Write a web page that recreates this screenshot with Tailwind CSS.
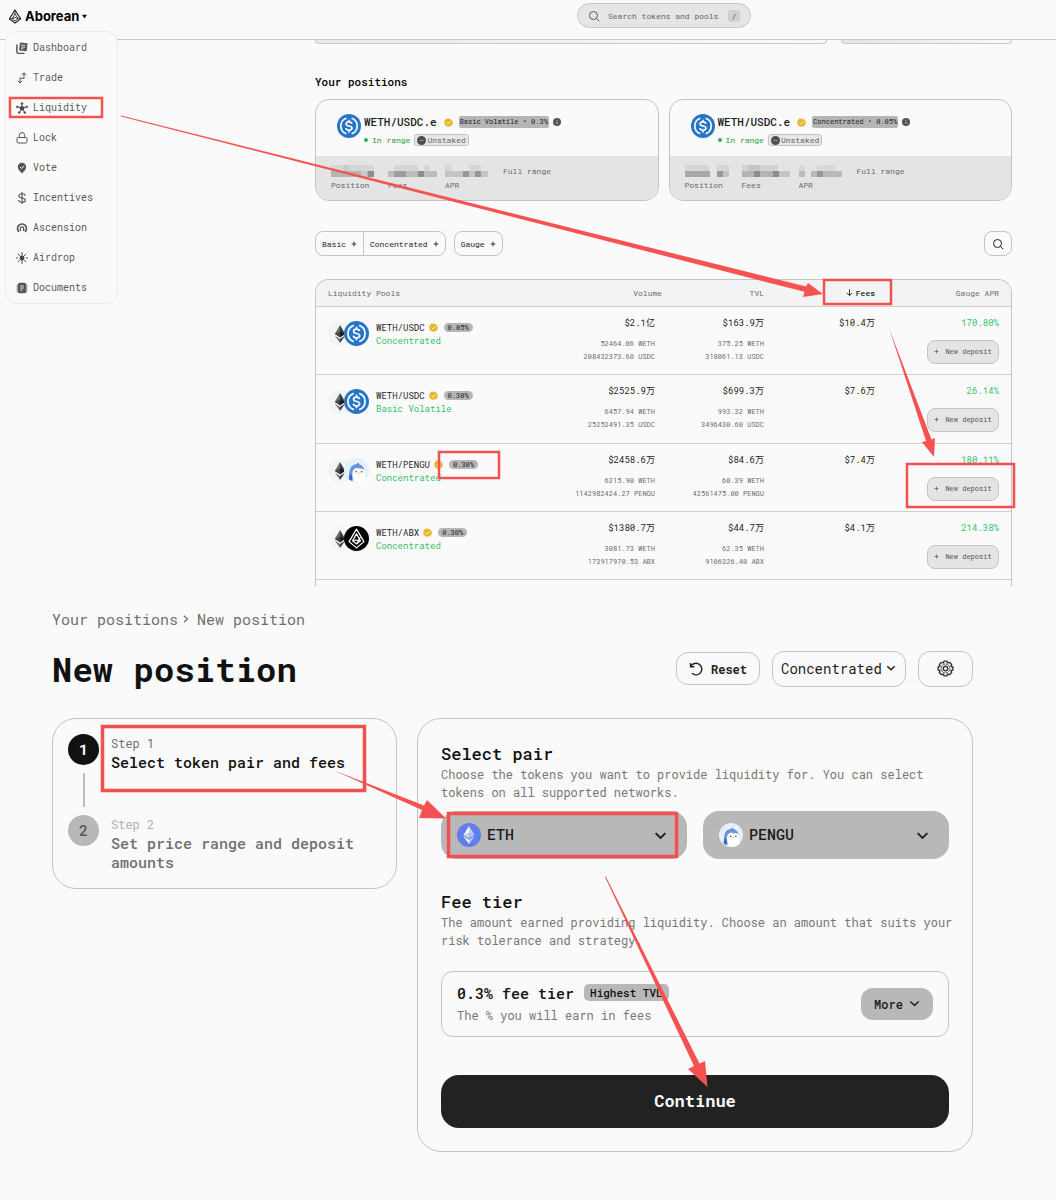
<!DOCTYPE html>
<html lang="en">
<head>
    <meta charset="UTF-8">
    <meta name="viewport" content="width=device-width, initial-scale=1.0">
    <title>Aborean - Liquidity</title>
    <script src="https://cdn.jsdelivr.net/npm/@tailwindcss/browser@4"></script>
    <style>
        body {
            font-family: 'Roboto Mono', 'DejaVu Sans Mono', 'Noto Sans CJK SC', monospace;
        }
    </style>
</head>
<body class="relative bg-[#fafafa] text-[#1c1c1c]">

    <!-- Shared icons -->
    <svg class="hidden" xmlns="http://www.w3.org/2000/svg">
        <symbol id="usdc" viewBox="0 0 32 32">
            <circle cx="16" cy="16" r="16" fill="#2775ca"/>
            <path d="M12.5 5.6a11 11 0 0 0 0 20.8M19.5 5.6a11 11 0 0 1 0 20.8" fill="none" stroke="#fff" stroke-width="2.2"/>
            <path d="M16 7.5v3M16 21.5v3M19.8 13c-.3-1.800-1.800-2.600-3.800-2.600-2.200 0-3.800 1-3.800 2.800 0 4 7.800 1.600 7.800 5.600 0 1.800-1.700 2.800-4 2.800-2.400 0-3.900-1-4.100-2.900" fill="none" stroke="#fff" stroke-width="2.200"/>
        </symbol>
        <symbol id="weth" viewBox="0 0 32 32">
            <circle cx="16" cy="16" r="16" fill="#f3f4f7"/>
            <path d="M16 4v13.500L9 16z" fill="#6b6b6b"/>
            <path d="M16 4v13.500L23 16z" fill="#3a3a3a"/>
            <path d="M9 16l7-3.500v8z" fill="#444"/>
            <path d="M23 16l-7-3.500v8z" fill="#1d1d1d"/>
            <path d="M9 18l7 4.500V28z" fill="#777"/>
            <path d="M23 18l-7 4.500V28z" fill="#3a3a3a"/>
        </symbol>
        <symbol id="eth" viewBox="0 0 32 32">
            <circle cx="16" cy="16" r="16" fill="#627eea"/>
            <path d="M16 4l-7.500 12.200L16 20.600z" fill="#fff"/>
            <path d="M16 4v16.600l7.500-4.400z" fill="#c6d0f8"/>
            <path d="M8.500 17.800L16 28v-5.800z" fill="#fff"/>
            <path d="M16 28l7.500-10.200-7.500 4.400z" fill="#c6d0f8"/>
            <path d="M8.500 16.200L16 12.800l7.500 3.400-7.500 4.400z" fill="#8ea2f0" opacity=".5"/>
        </symbol>
        <symbol id="pengu" viewBox="0 0 32 32">
            <circle cx="16" cy="16" r="16" fill="#e3f1fc"/>
            <path d="M6 27c1-4 .3-8 1.500-12C8.700 10.500 12 8 16.500 8c5 0 9 2.500 9.500 8l-3-2.500-8-1-4 3.500-.5 6 1 7c-2 0-4-.5-5.500-2z" fill="#6d8fe0"/>
            <path d="M12 30.500c1.500-3 .3-6-.3-9-.7-4 1.300-7.300 4.300-7.500 1.500 0 2 1 3.500 1s2.500-1.300 4-1c2.500.5 2.800 3.500 2.700 6 0 3.500 1.300 5.500.8 8.500-4.500 3-10 4-15 2z" fill="#fff"/>
            <path d="M16 8.500l2-1.500 1 1.500" fill="none" stroke="#4d6fc8" stroke-width="1.300"/>
            <circle cx="15.500" cy="17.500" r="1" fill="#333"/>
            <circle cx="22.500" cy="17.500" r="1" fill="#333"/>
            <path d="M17.500 18.800h3l-1.500 1.800z" fill="#eda33b"/>
            <path d="M7.500 21c-1 2.500-1.500 4.500-.5 6.500l3 1.500c.8-3 0-5.500-.5-8z" fill="#3f63c4"/>
        </symbol>
        <symbol id="abx" viewBox="0 0 32 32">
            <circle cx="16" cy="16" r="16" fill="#000"/>
            <path d="M16 4L6.500 20 16 28l9.500-8zM16 10l-5 9 5 4 5-4z" fill="none" stroke="#fff" stroke-width="1.600" stroke-linejoin="round"/>
            <path d="M11 19l4-1 6 1M16 23l5-9" fill="none" stroke="#fff" stroke-width="1.400"/>
        </symbol>
        <symbol id="verified" viewBox="0 0 20 20">
            <path d="M10 .8l2.300 1.700 2.900-.3 1.200 2.600 2.600 1.200-.3 2.900L20 10l-1.300 2.200.3 2.900-2.600 1.200-1.200 2.600-2.900-.3L10 20l-2.300-1.400-2.900.3-1.200-2.600L1 15.100l.3-2.900L0 10l1.300-2.100L1 5l2.600-1.200 1.200-2.600 2.900.3z" fill="#e9b62c"/>
            <path d="M5.500 10.200l3.200 3.200 6-6.200" fill="none" stroke="#fdf3c4" stroke-width="2.200"/>
        </symbol>
        <symbol id="info" viewBox="0 0 16 16">
            <circle cx="8" cy="8" r="8" fill="#555"/>
            <path d="M8 7v5M8 4v1.500" stroke="#ddd" stroke-width="1.600"/>
        </symbol>
        <symbol id="minus" viewBox="0 0 16 16">
            <circle cx="8" cy="8" r="8" fill="#4f4f4f"/>
            <path d="M4.500 8h7" stroke="#aaa" stroke-width="1.400"/>
        </symbol>
        <symbol id="search" viewBox="0 0 24 24">
            <circle cx="11" cy="11" r="8" fill="none" stroke="currentColor" stroke-width="2"/>
            <path d="M17 17l5 5" stroke="currentColor" stroke-width="2" stroke-linecap="round"/>
        </symbol>
        <symbol id="chevron" viewBox="0 0 12 12">
            <path d="M1.500 3.800L6 8.200l4.500-4.400" fill="none" stroke="currentColor" stroke-width="1.700"/>
        </symbol>
        <symbol id="plus" viewBox="0 0 10 10">
            <path d="M5 1v8M1 5h8" stroke="currentColor" stroke-width="1.400"/>
        </symbol>
    </svg>

    <header class="flex h-10 items-start border-b border-[#c9c9c9]">
        <div class="flex h-8 flex-1 items-center pl-2">
            <button class="flex items-center gap-[3px] text-[13px] leading-4 font-bold text-black font-['Inter',sans-serif]">
                <svg class="h-[15px] w-[14px]" viewBox="0 0 14 16" fill="none" stroke="#222" stroke-linejoin="round">
                    <path d="M7 1L1 10.500 7 15l6-4.500z" stroke-width="1.200"/>
                    <path d="M7 5l-3 5.500L7 12.700l3.200-2.400zM4 10.500l3-1.500 3.200 1.300M7 1v4M1 10.500h3M13 10.500h-3" stroke-width=".9"/>
                </svg>
                Aborean
                <svg class="size-[5px]" viewBox="0 0 6 6"><path d="M0 1h6L3 5.500z" fill="#111"/></svg>
            </button>
        </div>
        <label class="mt-[3px] flex h-[25px] w-[174px] items-center rounded-full border border-[#c8c8c8] bg-[#e5e5e5] px-[10px] text-[#555]">
            <svg class="size-3"><use href="#search"/></svg>
            <input type="search" aria-label="Search" placeholder="Search tokens and pools" class="ml-2 w-0 flex-1 bg-transparent text-[8px] outline-none placeholder:text-[#666]">
            <kbd class="flex size-3 items-center justify-center rounded-[2px] bg-[#cfcfcf] text-[8px] font-[inherit]">/</kbd>
        </label>
        <div class="w-[305px]"></div>
    </header>

    <!-- Main menu -->
    <nav class="absolute top-[31px] left-[5px] flex h-[273px] w-[113px] flex-col justify-between rounded-xl border border-[#ebebeb] bg-[#fafafa] pt-[9px] pb-2 pl-[10px] text-[10px] leading-[14px] text-[#5a5a5a]">
        <a href="#" class="flex items-center gap-[5px]">
            <svg class="size-3" viewBox="0 0 12 12"><path d="M4 .5l7.500.8-.8 8L3 8.500z" fill="#555"/><path d="M1 2.500L.8 9.500c0 1 .7 1.700 1.700 1.800l6 .2" fill="none" stroke="#555" stroke-width="1.500"/><path d="M5.300 3l4 .4M5.100 4.900l4 .4M4.900 6.700l2.500.3" stroke="#fafafa" stroke-width=".8"/></svg>
            Dashboard
        </a>
        <a href="#" class="flex items-center gap-[5px]">
            <svg class="size-3" viewBox="0 0 12 12" fill="none" stroke="#555"><path d="M8 1v5.500L4 6v5M5.700 3L8 .8 10.300 3M1.700 8.800L4 11l2.300-2.200"/></svg>
            Trade
        </a>
        <a href="#" class="flex items-center gap-[5px]">
            <svg class="size-3" viewBox="0 0 12 12" fill="#444" stroke="#444"><circle cx="6" cy="6.300" r="1.800"/><path d="M6 6V2M6 6L1.500 5M6 6l4.500-1M6 6.300l-2.600 4M6 6.300l2.600 4" stroke-width=".9"/><circle cx="6" cy="1.500" r=".8"/><circle cx="1.200" cy="4.800" r=".7"/><circle cx="10.800" cy="4.800" r=".7"/><circle cx="3.200" cy="10.500" r=".8"/><circle cx="8.800" cy="10.500" r=".8"/></svg>
            Liquidity
        </a>
        <a href="#" class="flex items-center gap-[5px]">
            <svg class="size-3" viewBox="0 0 12 12" fill="none" stroke="#555"><rect x="1" y="5.500" width="10" height="5.500" rx="1.300"/><path d="M3.300 5.500V3.300a2.700 2.700 0 0 1 5.400 0v2.200"/></svg>
            Lock
        </a>
        <a href="#" class="flex items-center gap-[5px]">
            <svg class="size-3" viewBox="0 0 12 12"><path d="M6 .8C3.500.8 1.800 2.600 1.800 5c0 2.500 2.500 4.500 4.200 6.500C7.700 9.500 10.200 7.500 10.200 5 10.200 2.600 8.500.8 6 .8z" fill="#555"/><path d="M4 5l1.500 1.500L8.200 3.600" fill="none" stroke="#fafafa"/></svg>
            Vote
        </a>
        <a href="#" class="flex items-center gap-[5px]">
            <svg class="size-3" viewBox="0 0 12 12" fill="none" stroke="#555" stroke-width="1.100"><path d="M6 0v12M9.300 3.700C9 2.300 7.800 1.800 6 1.800c-2 0-3.200.8-3.200 2 0 3 6.600 1.300 6.600 4.400 0 1.300-1.400 2-3.400 2-2.100 0-3.300-.7-3.500-2.200"/></svg>
            Incentives
        </a>
        <a href="#" class="flex items-center gap-[5px]">
            <svg class="size-3" viewBox="0 0 12 12" fill="none" stroke="#555"><path d="M3 9.800A4.500 4.500 0 1 1 9 9.800" stroke-width="1.600"/><path d="M4.300 9V6.500a1.700 1.700 0 0 1 3.400 0V9" stroke-width="1.300"/></svg>
            Ascension
        </a>
        <a href="#" class="flex items-center gap-[5px]">
            <svg class="size-3" viewBox="0 0 12 12" stroke="#444" stroke-width=".9"><circle cx="6" cy="6" r="2" fill="#444"/><path d="M6 0v12M0 6h2M10 6h2M1.800 1.800L10.200 10.200M10.200 1.800L1.800 10.200"/></svg>
            Airdrop
        </a>
        <a href="#" class="flex items-center gap-[5px]">
            <svg class="size-3" viewBox="0 0 12 12"><rect x=".5" y="2" width="11" height="8.500" rx="1.500" fill="#aaa"/><rect x="2" y=".8" width="8" height="10.400" rx="1.500" fill="#555"/><path d="M4 4h4M4 6h4M4 8h2.500" stroke="#fafafa" stroke-width=".8"/></svg>
            Documents
        </a>
    </nav>

    <main>
        <section class="pr-11 pl-[315px]">
            <div class="grid grid-cols-[3fr_1fr] gap-[14px]">
                <div class="h-1 rounded-b-[4px] border border-t-0 border-[#c9c9c9] bg-gradient-to-r from-[#ece9e9] to-[#fafafa]"></div>
                <div class="h-1 rounded-b-[4px] border border-t-0 border-[#c9c9c9] bg-gradient-to-r from-[#e6e3e3] to-[#fafafa]"></div>
            </div>

            <h2 class="mt-[30px] text-[11px] leading-4 font-medium text-black">Your positions</h2>

            <div class="mt-[9px] grid grid-cols-2 gap-[10px]">
                <article class="overflow-hidden rounded-[14px] border border-[#c4c4c4]">
                    <div class="flex h-14 items-start gap-[3px] pt-[14px] pl-[21px] whitespace-nowrap">
                        <svg class="size-6 shrink-0"><use href="#usdc"/></svg>
                        <div>
                            <div class="flex h-4 items-center text-[11px] font-medium">
                                WETH/USDC.e
                                <svg class="ml-[7px] size-[9px]"><use href="#verified"/></svg>
                                <span class="ml-[6px] rounded-[2px] bg-[#b5b5b5] px-px text-[7px] leading-3 font-normal">Basic Volatile • 0.3%</span>
                                <svg class="ml-1 size-2"><use href="#info"/></svg>
                            </div>
                            <div class="mt-1 flex h-3 items-center text-[8px]">
                                <span class="size-1 rounded-full bg-[#22b455]"></span>
                                <span class="ml-1 text-[#1f9a35]">In range</span>
                                <span class="ml-1 flex h-3 items-center gap-px rounded-[3px] border border-[#c4c4c4] bg-[#e8e8e8] px-[2px] text-[#666]">
                                    <svg class="size-[9px]"><use href="#minus"/></svg>Unstaked
                                </span>
                            </div>
                        </div>
                    </div>
                    <dl class="grid h-11 grid-cols-[57px_57px_58px_auto] bg-[#e4e4e4] pt-2 pl-[15px] text-[8px] leading-[14px] whitespace-nowrap text-[#6a6a6a]">
                        <div class="flex flex-col-reverse justify-end"><dt>Position</dt><dd class="flex h-[14px] items-center">
                            <svg class="h-3 w-[43px]" viewBox="0 0 43 12" shape-rendering="crispEdges"><path d="M0 0h43v6H0z" fill="#d6d6d6"/><path d="M0 6h43v6H0z" fill="#b4b4b4"/><path d="M12 0h6v6h-6zM30 6h6v6h-6z" fill="#c9c9c9"/><path d="M37 6h6v6h-6z" fill="#8f8f8f"/></svg>
                        </dd></div>
                        <div class="flex flex-col-reverse justify-end"><dt>Fees</dt><dd class="flex h-[14px] items-center">
                            <svg class="h-3 w-[49px]" viewBox="0 0 49 12" shape-rendering="crispEdges"><path d="M6 0h24v6H6zM36 0h6v6h-6z" fill="#d6d6d6"/><path d="M0 6h49v6H0z" fill="#bcbcbc"/><path d="M6 6h12v6H6z" fill="#9d9d9d"/><path d="M30 6h6v6h-6z" fill="#8d8d8d"/></svg>
                        </dd></div>
                        <div class="flex flex-col-reverse justify-end"><dt>APR</dt><dd class="flex h-[14px] items-center">
                            <svg class="h-3 w-[43px]" viewBox="0 0 43 12" shape-rendering="crispEdges"><path d="M0 0h6v6H0zM24 0h12v6H24z" fill="#d6d6d6"/><path d="M0 6h43v6H0z" fill="#c4c4c4"/><path d="M18 6h6v6h-6zM30 6h6v6h-6z" fill="#979797"/></svg>
                        </dd></div>
                        <dd>Full range</dd>
                    </dl>
                </article>

                <article class="overflow-hidden rounded-[14px] border border-[#c4c4c4]">
                    <div class="flex h-14 items-start gap-[3px] pt-[14px] pl-[21px] whitespace-nowrap">
                        <svg class="size-6 shrink-0"><use href="#usdc"/></svg>
                        <div>
                            <div class="flex h-4 items-center text-[11px] font-medium">
                                WETH/USDC.e
                                <svg class="ml-[7px] size-[9px]"><use href="#verified"/></svg>
                                <span class="ml-[6px] rounded-[2px] bg-[#b5b5b5] px-px text-[7px] leading-3 font-normal">Concentrated • 0.05%</span>
                                <svg class="ml-1 size-2"><use href="#info"/></svg>
                            </div>
                            <div class="mt-1 flex h-3 items-center text-[8px]">
                                <span class="size-1 rounded-full bg-[#22b455]"></span>
                                <span class="ml-1 text-[#1f9a35]">In range</span>
                                <span class="ml-1 flex h-3 items-center gap-px rounded-[3px] border border-[#c4c4c4] bg-[#e8e8e8] px-[2px] text-[#666]">
                                    <svg class="size-[9px]"><use href="#minus"/></svg>Unstaked
                                </span>
                            </div>
                        </div>
                    </div>
                    <dl class="grid h-11 grid-cols-[57px_57px_58px_auto] bg-[#e4e4e4] pt-2 pl-[15px] text-[8px] leading-[14px] whitespace-nowrap text-[#6a6a6a]">
                        <div class="flex flex-col-reverse justify-end"><dt>Position</dt><dd class="flex h-[14px] items-center">
                            <svg class="h-3 w-[45px]" viewBox="0 0 45 12" shape-rendering="crispEdges"><path d="M0 0h24v6H0zM32 0h12v6H32z" fill="#d6d6d6"/><path d="M0 6h25v6H0z" fill="#a8a8a8"/><path d="M32 6h6v6h-6z" fill="#9a9a9a"/><path d="M38 6h6v6h-6z" fill="#c4c4c4"/></svg>
                        </dd></div>
                        <div class="flex flex-col-reverse justify-end"><dt>Fees</dt><dd class="flex h-[14px] items-center">
                            <svg class="h-3 w-[49px]" viewBox="0 0 49 12" shape-rendering="crispEdges"><path d="M0 0h36v6H0z" fill="#d2d2d2"/><path d="M6 0h12v6H6zM36 6h12v6H36z" fill="#c4c4c4"/><path d="M0 6h36v6H0z" fill="#b4b4b4"/><path d="M12 6h6v6h-6zM31 6h6v6h-6z" fill="#8d8d8d"/></svg>
                        </dd></div>
                        <div class="flex flex-col-reverse justify-end"><dt>APR</dt><dd class="flex h-[14px] items-center">
                            <svg class="h-3 w-[43px]" viewBox="0 0 43 12" shape-rendering="crispEdges"><path d="M0 0h6v6H0zM18 0h18v6H18z" fill="#d8d8d8"/><path d="M0 6h6v6H0zM12 6h31v6H12z" fill="#b9b9b9"/><path d="M18 6h6v6h-6z" fill="#979797"/></svg>
                        </dd></div>
                        <dd>Full range</dd>
                    </dl>
                </article>
            </div>

            <!-- Pool filters -->
            <div class="mt-[30px] flex h-[25px] gap-2 text-[8px]">
                <div class="flex rounded-[8px] border border-[#c4c4c4]">
                    <button class="flex items-center gap-[5px] border-r border-[#c4c4c4] px-[6px]">Basic <svg class="size-[6px]"><use href="#plus"/></svg></button>
                    <button class="flex items-center gap-[5px] px-[6px]">Concentrated <svg class="size-[6px]"><use href="#plus"/></svg></button>
                </div>
                <button class="flex items-center gap-[5px] rounded-[8px] border border-[#c4c4c4] px-[6px]">Gauge <svg class="size-[6px]"><use href="#plus"/></svg></button>
                <button aria-label="Search pools" class="ml-auto flex w-7 items-center justify-center rounded-[8px] border border-[#c4c4c4]">
                    <svg class="size-3"><use href="#search"/></svg>
                </button>
            </div>

            <div class="mt-[23px] overflow-hidden rounded-t-[14px] border border-b-0 border-[#c4c4c4]">
                <table class="w-full table-fixed text-right whitespace-nowrap">
                    <colgroup>
                        <col><col class="w-[110px]"><col class="w-[102px]"><col class="w-[111px]"><col class="w-[136px]">
                    </colgroup>
                    <thead>
                        <tr class="h-[26px] border-b border-[#cfcfcf] bg-[#f3f3f3] text-[8px] leading-3 text-[#6a6a6a]">
                            <th class="pl-3 text-left font-normal">Liquidity Pools</th>
                            <th class="font-normal">Volume</th>
                            <th class="font-normal">TVL</th>
                            <th class="font-medium text-[#1c1c1c]">
                                <button class="inline-flex items-center gap-[3px]"><svg class="size-[7px]" viewBox="0 0 8 8" fill="none" stroke="currentColor"><path d="M4 .5v7M1 4.500l3 3 3-3"/></svg>Fees</button>
                            </th>
                            <th class="pr-3 font-normal">Gauge APR</th>
                        </tr>
                    </thead>
                    <tbody class="text-[9px] leading-[13px]">
                        <tr class="h-[68px] border-b border-[#cfcfcf] align-top">
                            <td class="pt-[14px] pl-3 text-left">
                                <div class="flex">
                                    <svg class="mt-px size-6"><use href="#weth"/></svg>
                                    <svg class="-ml-2 size-[25px]"><use href="#usdc"/></svg>
                                    <div class="ml-[7px]">
                                        <div class="flex items-center">WETH/USDC <svg class="ml-1 size-[9px]"><use href="#verified"/></svg><span class="ml-[6px] rounded-full bg-[#b5b5b5] px-1 text-[7px] leading-[9px]">0.05%</span></div>
                                        <div class="text-[#35bf6a]">Concentrated</div>
                                    </div>
                                </div>
                            </td>
                            <td class="pt-[9px] pr-[7px]">$2.1亿<div class="mt-2 text-[7px] text-[#6a6a6a]">52464.06 WETH<br>208432373.60 USDC</div></td>
                            <td class="pt-[9px]">$163.9万<div class="mt-2 text-[7px] text-[#6a6a6a]">375.25 WETH<br>318061.13 USDC</div></td>
                            <td class="pt-[9px]">$10.4万</td>
                            <td class="pt-[9px] pr-3 text-[#35bf6a]">170.80%<button class="mt-[11px] ml-auto flex h-6 w-[72px] items-center justify-center gap-[6px] rounded-[8px] border border-[#c4c4c4] bg-[#e4e4e4] text-[7px] text-[#555]"><svg class="size-[5px]"><use href="#plus"/></svg>New deposit</button></td>
                        </tr>
                        <tr class="h-[69px] border-b border-[#cfcfcf] align-top">
                            <td class="pt-[14px] pl-3 text-left">
                                <div class="flex">
                                    <svg class="mt-px size-6"><use href="#weth"/></svg>
                                    <svg class="-ml-2 size-[25px]"><use href="#usdc"/></svg>
                                    <div class="ml-[7px]">
                                        <div class="flex items-center">WETH/USDC <svg class="ml-1 size-[9px]"><use href="#verified"/></svg><span class="ml-[6px] rounded-full bg-[#b5b5b5] px-1 text-[7px] leading-[9px]">0.30%</span></div>
                                        <div class="text-[#35bf6a]">Basic Volatile</div>
                                    </div>
                                </div>
                            </td>
                            <td class="pt-[9px] pr-[7px]">$2525.9万<div class="mt-2 text-[7px] text-[#6a6a6a]">6457.94 WETH<br>25252491.35 USDC</div></td>
                            <td class="pt-[9px]">$699.3万<div class="mt-2 text-[7px] text-[#6a6a6a]">993.32 WETH<br>3496430.60 USDC</div></td>
                            <td class="pt-[9px]">$7.6万</td>
                            <td class="pt-[9px] pr-3 text-[#35bf6a]">26.14%<button class="mt-[11px] ml-auto flex h-6 w-[72px] items-center justify-center gap-[6px] rounded-[8px] border border-[#c4c4c4] bg-[#e4e4e4] text-[7px] text-[#555]"><svg class="size-[5px]"><use href="#plus"/></svg>New deposit</button></td>
                        </tr>
                        <tr class="h-[68px] border-b border-[#cfcfcf] align-top">
                            <td class="pt-[14px] pl-3 text-left">
                                <div class="flex">
                                    <svg class="mt-px size-6"><use href="#weth"/></svg>
                                    <svg class="-ml-2 size-[25px]"><use href="#pengu"/></svg>
                                    <div class="ml-[7px]">
                                        <div class="flex items-center">WETH/PENGU <svg class="ml-1 size-[9px]"><use href="#verified"/></svg><span class="ml-[6px] rounded-full bg-[#b5b5b5] px-1 text-[7px] leading-[9px]">0.30%</span></div>
                                        <div class="text-[#35bf6a]">Concentrated</div>
                                    </div>
                                </div>
                            </td>
                            <td class="pt-[9px] pr-[7px]">$2458.6万<div class="mt-2 text-[7px] text-[#6a6a6a]">6215.90 WETH<br>1142982424.27 PENGU</div></td>
                            <td class="pt-[9px]">$84.6万<div class="mt-2 text-[7px] text-[#6a6a6a]">60.39 WETH<br>42561475.00 PENGU</div></td>
                            <td class="pt-[9px]">$7.4万</td>
                            <td class="pt-[9px] pr-3 text-[#35bf6a]">180.11%<button class="mt-[11px] ml-auto flex h-6 w-[72px] items-center justify-center gap-[6px] rounded-[8px] border border-[#c4c4c4] bg-[#e4e4e4] text-[7px] text-[#555]"><svg class="size-[5px]"><use href="#plus"/></svg>New deposit</button></td>
                        </tr>
                        <tr class="h-[68px] border-b border-[#cfcfcf] align-top">
                            <td class="pt-[14px] pl-3 text-left">
                                <div class="flex">
                                    <svg class="mt-px size-6"><use href="#weth"/></svg>
                                    <svg class="-ml-2 size-[25px]"><use href="#abx"/></svg>
                                    <div class="ml-[7px]">
                                        <div class="flex items-center">WETH/ABX <svg class="ml-1 size-[9px]"><use href="#verified"/></svg><span class="ml-[6px] rounded-full bg-[#b5b5b5] px-1 text-[7px] leading-[9px]">0.30%</span></div>
                                        <div class="text-[#35bf6a]">Concentrated</div>
                                    </div>
                                </div>
                            </td>
                            <td class="pt-[9px] pr-[7px]">$1380.7万<div class="mt-2 text-[7px] text-[#6a6a6a]">3081.73 WETH<br>173917970.53 ABX</div></td>
                            <td class="pt-[9px]">$44.7万<div class="mt-2 text-[7px] text-[#6a6a6a]">62.35 WETH<br>9106326.40 ABX</div></td>
                            <td class="pt-[9px]">$4.1万</td>
                            <td class="pt-[9px] pr-3 text-[#35bf6a]">214.38%<button class="mt-[11px] ml-auto flex h-6 w-[72px] items-center justify-center gap-[6px] rounded-[8px] border border-[#c4c4c4] bg-[#e4e4e4] text-[7px] text-[#555]"><svg class="size-[5px]"><use href="#plus"/></svg>New deposit</button></td>
                        </tr>
                    </tbody>
                </table>
                <div class="h-[6px]"></div>
            </div>
        </section>

        <!-- New position -->
        <section class="pt-[23px] pr-[83px] pb-12 pl-[52px]">
            <nav class="flex items-center gap-2 text-[15px] leading-5 text-[#707070]">
                <a href="#" class="flex items-center gap-[5px]">Your positions <svg class="h-2 w-[6px]" viewBox="0 0 6 8"><path d="M1 .8L4.500 4 1 7.200" fill="none" stroke="currentColor" stroke-width="1.300"/></svg></a>
                <span>New position</span>
            </nav>

            <div class="mt-5 flex items-center gap-3">
                <h1 class="mr-auto text-[34px] leading-10 font-bold text-[#111]">New position</h1>
                <button class="flex h-[33px] w-[84px] items-center justify-center gap-2 rounded-xl border border-[#c4c4c4] text-[12px] font-bold text-[#222]">
                    <svg class="size-[14px]" viewBox="0 0 14 14" fill="none" stroke="currentColor" stroke-width="1.400"><path d="M1.500 1v3.800h3.800M1.700 4.600A5.800 5.800 0 1 1 3 11.300"/></svg>
                    Reset
                </button>
                <div class="relative text-[14px]">
                    <select aria-label="Pool type" class="h-9 w-[134px] appearance-none rounded-xl border border-[#c4c4c4] bg-transparent pl-2">
                        <option>Concentrated</option>
                        <option>Basic Volatile</option>
                    </select>
                    <svg class="pointer-events-none absolute top-3 right-[10px] size-[10px]"><use href="#chevron"/></svg>
                </div>
                <button aria-label="Settings" class="flex h-9 w-[55px] items-center justify-center rounded-xl border border-[#c4c4c4]">
                    <svg class="size-[17px]" viewBox="0 0 18 18" fill="none" stroke="#333" stroke-linejoin="round">
                        <path d="M7.400 1.200h3.200l.7 1.900 1.900-.6 2.300 2.300-.6 1.900 1.900.7v3.200l-1.900.7.600 1.900-2.300 2.300-1.900-.6-.7 1.900H7.400l-.7-1.900-1.900.6-2.300-2.300.6-1.900-1.900-.7V7.400l1.900-.7-.6-1.900 2.300-2.300 1.900.6z" stroke-width="1.500"/>
                        <circle cx="9" cy="9" r="2.400" stroke-width="1.500"/><circle cx="9" cy="9" r="4.800" stroke-width=".8"/>
                    </svg>
                </button>
            </div>

            <div class="mt-[29px] grid grid-cols-[minmax(0,345fr)_minmax(0,556fr)] items-start gap-5">
                <ol class="rounded-[24px] border border-[#c4c4c4] pt-[15px] pr-4 pb-4 pl-[15px]">
                    <li class="flex gap-3">
                        <div class="flex flex-col items-center">
                            <span class="flex size-[31px] items-center justify-center rounded-full bg-[#111] text-[15px] font-bold text-white">1</span>
                            <span class="mt-2 h-[34px] w-[2px] bg-[#bdbdbd]"></span>
                        </div>
                        <div>
                            <p class="text-[12px] leading-[19px] text-[#707070]">Step 1</p>
                            <h3 class="text-[15px] leading-[19px] font-medium text-[#111]">Select token pair and fees</h3>
                        </div>
                    </li>
                    <li class="mt-2 flex gap-3">
                        <span class="flex size-[31px] shrink-0 items-center justify-center rounded-full bg-[#b8b8b8] text-[15px] font-medium text-[#555]">2</span>
                        <div>
                            <p class="text-[12px] leading-[19px] text-[#b0b0b0]">Step 2</p>
                            <h3 class="text-[15px] leading-[19px] font-medium text-[#707070]">Set price range and deposit amounts</h3>
                        </div>
                    </li>
                </ol>

                <form class="rounded-[24px] border border-[#c4c4c4] px-[23px] pt-6 pb-[23px]">
                    <h2 class="text-[17px] leading-[22px] font-medium text-[#111]">Select pair</h2>
                    <p class="text-[12px] leading-[18px] whitespace-nowrap text-[#777]">Choose the tokens you want to provide liquidity for. You can select<br>tokens on all supported networks.</p>
                    <div class="mt-[10px] grid grid-cols-2 gap-4 text-[15px] font-medium">
                        <div class="relative">
                            <select aria-label="First token" class="h-12 w-full appearance-none rounded-2xl bg-[#b8b8b8] pl-[46px]">
                                <option>ETH</option>
                                <option>WETH</option>
                            </select>
                            <svg class="pointer-events-none absolute top-3 left-4 size-6"><use href="#eth"/></svg>
                            <svg class="pointer-events-none absolute top-[18px] right-5 size-[13px]"><use href="#chevron"/></svg>
                        </div>
                        <div class="relative">
                            <select aria-label="Second token" class="h-12 w-full appearance-none rounded-2xl bg-[#b8b8b8] pl-[46px]">
                                <option>PENGU</option>
                                <option>USDC</option>
                            </select>
                            <svg class="pointer-events-none absolute top-3 left-4 size-6"><use href="#pengu"/></svg>
                            <svg class="pointer-events-none absolute top-[18px] right-5 size-[13px]"><use href="#chevron"/></svg>
                        </div>
                    </div>

                    <h2 class="mt-8 text-[17px] leading-[22px] font-medium text-[#111]">Fee tier</h2>
                    <p class="text-[12px] leading-[18px] whitespace-nowrap text-[#777]">The amount earned providing liquidity. Choose an amount that suits your<br>risk tolerance and strategy.</p>
                    <div class="mt-[22px] flex h-[66px] items-center justify-between rounded-xl border border-[#c4c4c4] px-[15px]">
                        <div>
                            <div class="flex items-center gap-[10px] text-[15px] leading-[22px] font-medium text-[#111]">0.3% fee tier <span class="rounded-[5px] bg-[#b8b8b8] px-[6px] text-[11px] leading-[17px]">Highest TVL</span></div>
                            <p class="text-[12px] leading-[22px] text-[#777]">The % you will earn in fees</p>
                        </div>
                        <button type="button" class="flex h-8 w-18 items-center justify-center gap-[6px] rounded-xl bg-[#b8b8b8] text-[12px] font-medium">More <svg class="size-[11px]"><use href="#chevron"/></svg></button>
                    </div>

                    <button type="submit" class="mt-[38px] h-[53px] w-full rounded-[18px] bg-[#222] text-[17px] font-bold text-white">Continue</button>
                </form>
            </div>
        </section>
    </main>

    <!-- Walkthrough marks -->
    <svg class="pointer-events-none absolute top-0 left-0 w-full" viewBox="0 0 1056 1200">
        <g fill="none" stroke="#f05252" stroke-width="2.500">
            <rect x="10" y="98" width="92" height="19"/>
            <rect x="824" y="280" width="67" height="24"/>
            <rect x="439" y="452" width="60" height="26"/>
            <rect x="907" y="464" width="107" height="43"/>
            <rect x="102.500" y="726.500" width="262" height="64" stroke-width="3.500"/>
            <rect x="448.500" y="813.500" width="228" height="43" stroke-width="3.500"/>
        </g>
        <g fill="#f65252">
            <path d="M121 115.600L806 286.500l2-3.500 15 11-20 3 1.500-5.200L121 116.400z"/>
            <path d="M889 328l37 113-4 1 12 15 1-19-3.500 1.500z"/>
            <path d="M333 770l89 40-3 8 27 .5L427 800l-3 5.500z"/>
            <path d="M605 877l89 189-6 3 19.500 18-2.500-26-5.500 2.500L605.800 876.500z"/>
        </g>
    </svg>
</body>
</html>
